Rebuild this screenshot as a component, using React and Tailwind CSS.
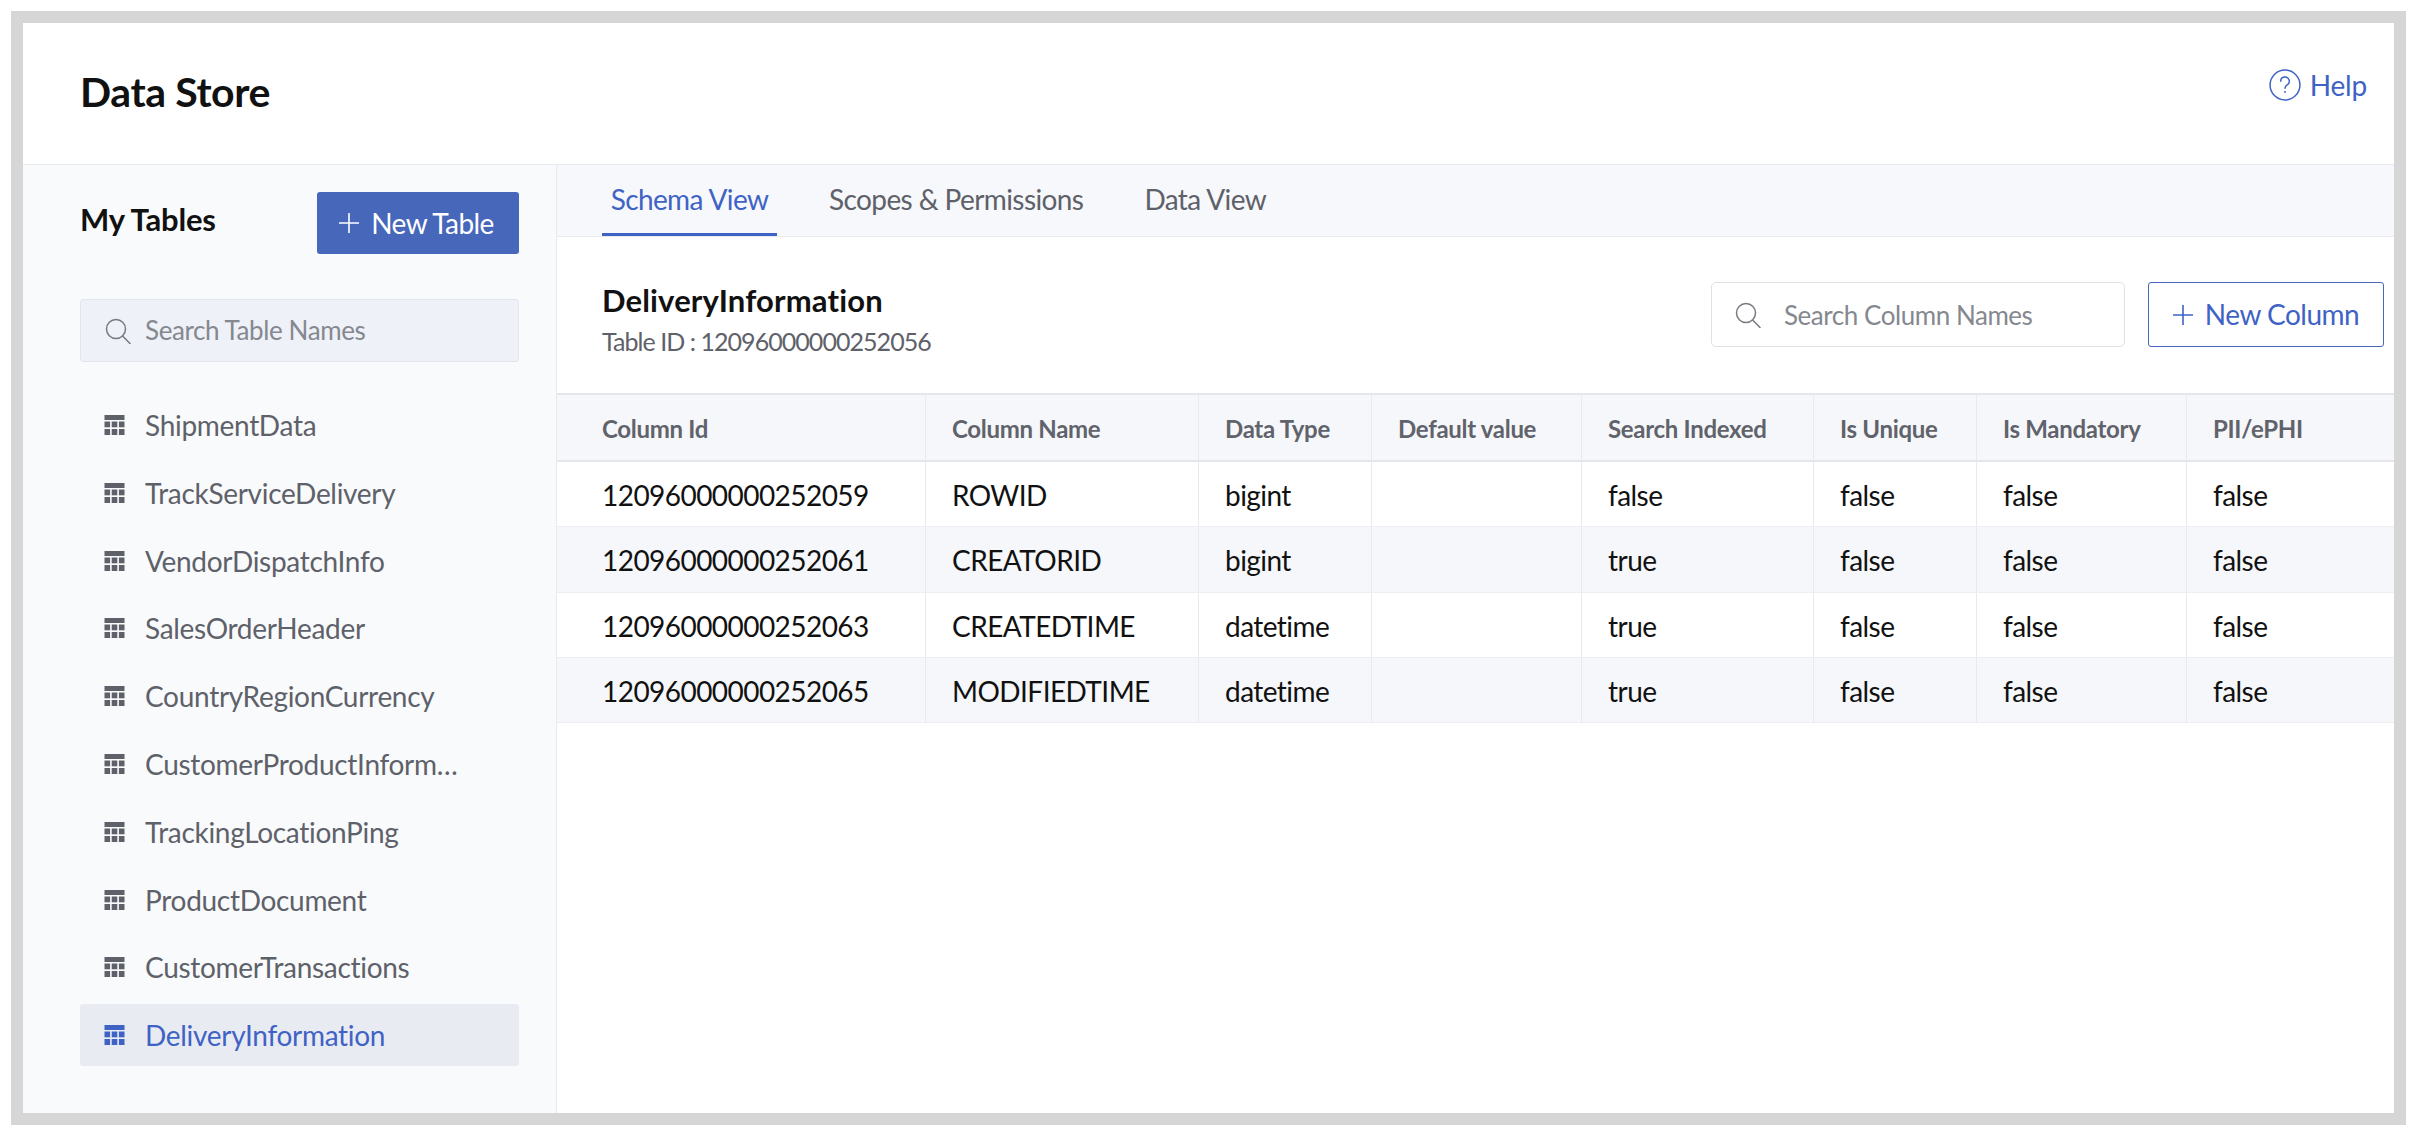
import React from "react";

const tables = ["ShipmentData","TrackServiceDelivery","VendorDispatchInfo","SalesOrderHeader","CountryRegionCurrency","CustomerProductInformation","TrackingLocationPing","ProductDocument","CustomerTransactions","DeliveryInformation"];
const cols = ["Column Id","Column Name","Data Type","Default value","Search Indexed","Is Unique","Is Mandatory","PII/ePHI"];
const rows = [
  ["12096000000252059","ROWID","bigint","","false","false","false","false"],
  ["12096000000252061","CREATORID","bigint","","true","false","false","false"],
  ["12096000000252063","CREATEDTIME","datetime","","true","false","false","false"],
  ["12096000000252065","MODIFIEDTIME","datetime","","true","false","false","false"],
];
const grid = "grid grid-cols-[368px_273px_173px_210px_232px_163px_210px_208px]";

function TableIcon({ className }) {
  return (
    <svg viewBox="0 0 20 20" className={className} fill="currentColor">
      <rect x="0" y="0" width="20" height="5" />
      <rect x="0" y="6.5" width="5.6" height="5.8" /><rect x="7.2" y="6.5" width="5.6" height="5.8" /><rect x="14.4" y="6.5" width="5.6" height="5.8" />
      <rect x="0" y="14" width="5.6" height="6" /><rect x="7.2" y="14" width="5.6" height="6" /><rect x="14.4" y="14" width="5.6" height="6" />
    </svg>
  );
}
function SearchIcon({ className }) {
  return (
    <svg viewBox="0 0 26 26" className={className} fill="none" stroke="currentColor" strokeWidth="1.5" strokeLinecap="round">
      <circle cx="11" cy="11" r="9.5" />
      <path d="M17.6 18 L25 25.5" />
    </svg>
  );
}
function PlusIcon({ className }) {
  return (
    <svg viewBox="0 0 20 20" className={className} fill="none" stroke="currentColor" strokeWidth="1.6">
      <path d="M10 0V20M0 10H20" />
    </svg>
  );
}

export default function App() {
  return (
    <div className="bg-white p-[11px] w-[2416px] h-[1136px] font-['Lato',sans-serif]">
      <div className="w-[2395px] h-[1114px] border-[12px] border-[#d6d6d6] bg-white flex flex-col overflow-hidden">
        <header className="h-[142px] shrink-0 border-b border-[#e8eaef] flex justify-between pl-[57px] pr-[27px]">
          <h1 className="text-[41px] tracking-[-0.4px] font-bold text-[#111] leading-none mt-[48px]">Data Store</h1>
          <div className="flex items-center gap-[9px] h-[32px] mt-[46px] text-[#3f63c5] text-[28px] tracking-[-0.2px]">
            <svg viewBox="0 0 30 30" className="w-[32px] h-[32px]" fill="none" stroke="currentColor" strokeWidth="1.4">
              <circle cx="15" cy="15" r="14" />
              <path d="M11 11.5 a4 4 0 1 1 6 3.4 c-1.4 .9 -2 1.6 -2 3.2" strokeLinecap="round" />
              <circle cx="15" cy="21.5" r="0.9" fill="currentColor" stroke="none" />
            </svg>
            <span>Help</span>
          </div>
        </header>
        <div className="flex flex-1 min-h-0">
          <aside className="w-[534px] shrink-0 bg-[#f9fafc] border-r border-[#e8eaef] pl-[57px] pr-[37px] pt-[27px]">
            <div className="flex justify-between h-[62px]">
              <span className="text-[31px] tracking-[-0.2px] font-bold text-[#111] leading-none mt-[12px]">My Tables</span>
              <button className="w-[202px] h-[62px] rounded-[3px] bg-[#4767bb] text-white text-[28px] tracking-[-0.55px] flex items-center justify-center gap-[12px] pr-[3px]">
                <PlusIcon className="w-[20px] h-[20px]" />
                <span>New Table</span>
              </button>
            </div>
            <div className="mt-[45px] h-[63px] rounded-[3px] border border-[#e2e5ec] bg-[#eef1f8] flex items-center pl-[24px] gap-[14px] text-[26px] tracking-[-0.4px] text-[#85888f]">
              <SearchIcon className="w-[26px] h-[26px] text-[#777a82]" />
              <span>Search Table Names</span>
            </div>
            <ul className="mt-[32px] flex flex-col gap-[5.8px]">
              {tables.map((t, i) => {
                const active = i === tables.length - 1;
                return (
                  <li key={t} className={`h-[62px] rounded-[3px] flex items-center pl-[24px] gap-[20px] text-[28px] tracking-[-0.3px] ${active ? "bg-[#e9ebf3] text-[#3f63c5]" : "text-[#5e6169]"}`}>
                    <TableIcon className="w-[21px] h-[20px] shrink-0" />
                    <span className="truncate w-[314px]">{t}</span>
                  </li>
                );
              })}
            </ul>
          </aside>
          <main className="flex-1 min-w-0 flex flex-col">
            <nav className="h-[72px] shrink-0 bg-[#f7f8fb] border-b border-[#e8eaef] flex pl-[45px] text-[28px] tracking-[-0.6px] text-[#5e6169]">
              <div className="h-[71px] w-[175px] border-b-[3px] border-[#3f63c5] text-[#3f63c5] flex items-center justify-center">Schema View</div>
              <div className="h-[71px] pb-[3px] ml-[52px] flex items-center">Scopes &amp; Permissions</div>
              <div className="h-[71px] pb-[3px] ml-[61px] flex items-center">Data View</div>
            </nav>
            <div className="h-[156px] shrink-0 flex justify-between pl-[45px] pr-[10px]">
              <div className="pt-[48px]">
                <div className="text-[31px] tracking-[0.15px] font-bold text-[#111] leading-none">DeliveryInformation</div>
                <div className="text-[25px] tracking-[-0.95px] text-[#5e6169] leading-none mt-[13px]">Table ID : 12096000000252056</div>
              </div>
              <div className="flex gap-[23px] pt-[45px]">
                <div className="w-[414px] h-[65px] rounded-[5px] border border-[#dfe1e7] bg-white flex items-center pl-[23px] gap-[23px] text-[26px] tracking-[-0.45px] text-[#85888f]">
                  <SearchIcon className="w-[26px] h-[26px] text-[#777a82]" />
                  <span className="mt-[2px]">Search Column Names</span>
                </div>
                <button className="w-[236px] h-[65px] rounded-[3px] border border-[#4767bb] text-[#3f63c5] text-[28px] tracking-[-0.5px] flex items-center justify-center gap-[12px]">
                  <PlusIcon className="w-[20px] h-[20px]" />
                  <span className="mb-[2px]">New Column</span>
                </button>
              </div>
            </div>
            <div>
              <div className={`${grid} h-[69px] bg-[#f6f7fa] border-y-[2px] border-[#e4e6ec]`}>
                {cols.map((c, i) => (
                  <div key={c} className={`flex items-center pt-[2px] text-[24px] tracking-[-0.3px] font-bold text-[#60636b] ${i === 0 ? "pl-[45px]" : "pl-[26px] border-l border-[#e8eaef]"}`}>{c}</div>
                ))}
              </div>
              {rows.map((r, ri) => (
                <div key={r[0]} className={`${grid} h-[65.3px] border-b border-[#eceef2] ${ri % 2 ? "bg-[#f6f7fa]" : "bg-white"}`}>
                  {r.map((c, i) => (
                    <div key={i} className={`flex items-center pt-[2px] text-[28px] tracking-[-0.55px] text-[#111] ${i === 0 ? "pl-[45px]" : "pl-[26px] border-l border-[#e8eaef]"}`}>{c}</div>
                  ))}
                </div>
              ))}
            </div>
          </main>
        </div>
      </div>
    </div>
  );
}
